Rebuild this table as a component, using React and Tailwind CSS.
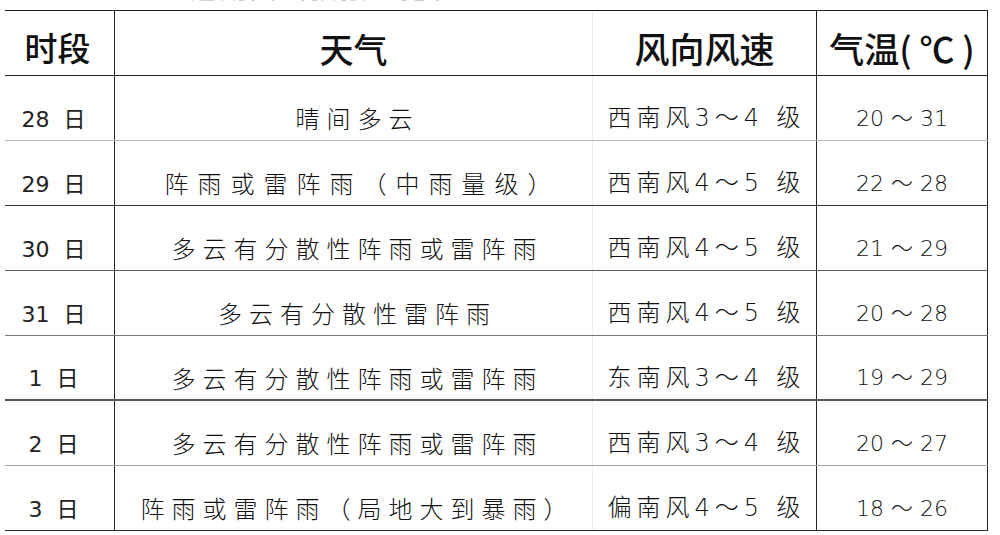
const rows = [
  { day: "28  日", weather: "晴间多云", wind: "西南风3～4 级", temp: "20 ～ 31", line: "border-[#b5b5b5]" },
  { day: "29  日", weather: "阵雨或雷阵雨（中雨量级）", wind: "西南风4～5 级", temp: "22 ～ 28", line: "border-[#3a3a3a]", wide: true },
  { day: "30  日", weather: "多云有分散性阵雨或雷阵雨", wind: "西南风4～5 级", temp: "21 ～ 29", line: "border-[#5a5a5a]" },
  { day: "31  日", weather: "多云有分散性雷阵雨", wind: "西南风4～5 级", temp: "20 ～ 28", line: "border-[#7a7a7a]" },
  { day: "1  日", weather: "多云有分散性阵雨或雷阵雨", wind: "东南风3～4 级", temp: "19 ～ 29", line: "border-[#555555] border-b-2" },
  { day: "2  日", weather: "多云有分散性阵雨或雷阵雨", wind: "西南风3～4 级", temp: "20 ～ 27", line: "border-[#a8a8a8]" },
  { day: "3  日", weather: "阵雨或雷阵雨（局地大到暴雨）", wind: "偏南风4～5 级", temp: "18 ～ 26", line: "border-[#2a2a2a]" },
];

const cjk = "font-['Noto_Sans_CJK_SC',sans-serif]";
const num = "font-['DejaVu_Sans','Noto_Sans_CJK_SC',sans-serif]";

export default function App() {
  return (
    <div className="w-[1000px] h-[535px] bg-white overflow-hidden text-[#111]">
      {/* title above, cut off by the crop */}
      <div className="h-[10px] overflow-hidden">
        <div className={`${cjk} -mt-[27px] ml-[190px] text-[26px] leading-[30px] tracking-[4px] text-[#c8c8c8]`}>
          近期天气预报一览表
        </div>
      </div>

      <div className="ml-[5px] w-[983px] border-t border-[#222]">
        {/* header */}
        <div className="grid grid-cols-[110px_478px_224px_171px] h-[65px] border-b border-[#222]">
          <div className={`${cjk} flex items-center justify-center pt-[10px] pr-[4px] text-[33px] font-medium border-r border-[#222]`}>
            时段
          </div>
          <div className={`${cjk} flex items-center justify-center pt-[10px] text-[34px] font-medium border-r border-[#eeeeee]`}>
            天气
          </div>
          <div className={`${cjk} flex items-center justify-center pt-[10px] text-[35px] font-medium border-r border-[#222]`}>
            风向风速
          </div>
          <div className={`${cjk} flex items-center justify-center pt-[10px] text-[35px] font-medium border-r border-[#222] whitespace-pre`}>
            气温( ℃ )
          </div>
        </div>

        {rows.map((r) => (
          <div
            key={r.day}
            className={`grid grid-cols-[110px_478px_224px_171px] h-[65px] border-b ${r.line}`}
          >
            <div className={`${num} flex items-center justify-center pt-[22px] pr-[12px] text-[22px] text-[#222] border-r border-[#222] whitespace-pre`}>
              {r.day}
            </div>
            <div
              className={`${cjk} flex items-center justify-center pt-[20px] pl-[8px] text-[24px] font-light border-r border-[#eeeeee] ${
                r.wide ? "tracking-[9px] pl-[18px]" : "tracking-[7px]"
              }`}
            >
              {r.weather}
            </div>
            <div className={`${num} flex items-center justify-center pt-[20px] pl-[4px] text-[24px] font-light tracking-[5px] border-r border-[#222] whitespace-pre`}>
              {r.wind}
            </div>
            <div className={`${num} flex items-center justify-center pt-[20px] text-[22px] font-light border-r border-[#222] whitespace-pre`}>
              {r.temp}
            </div>
          </div>
        ))}
      </div>
    </div>
  );
}
